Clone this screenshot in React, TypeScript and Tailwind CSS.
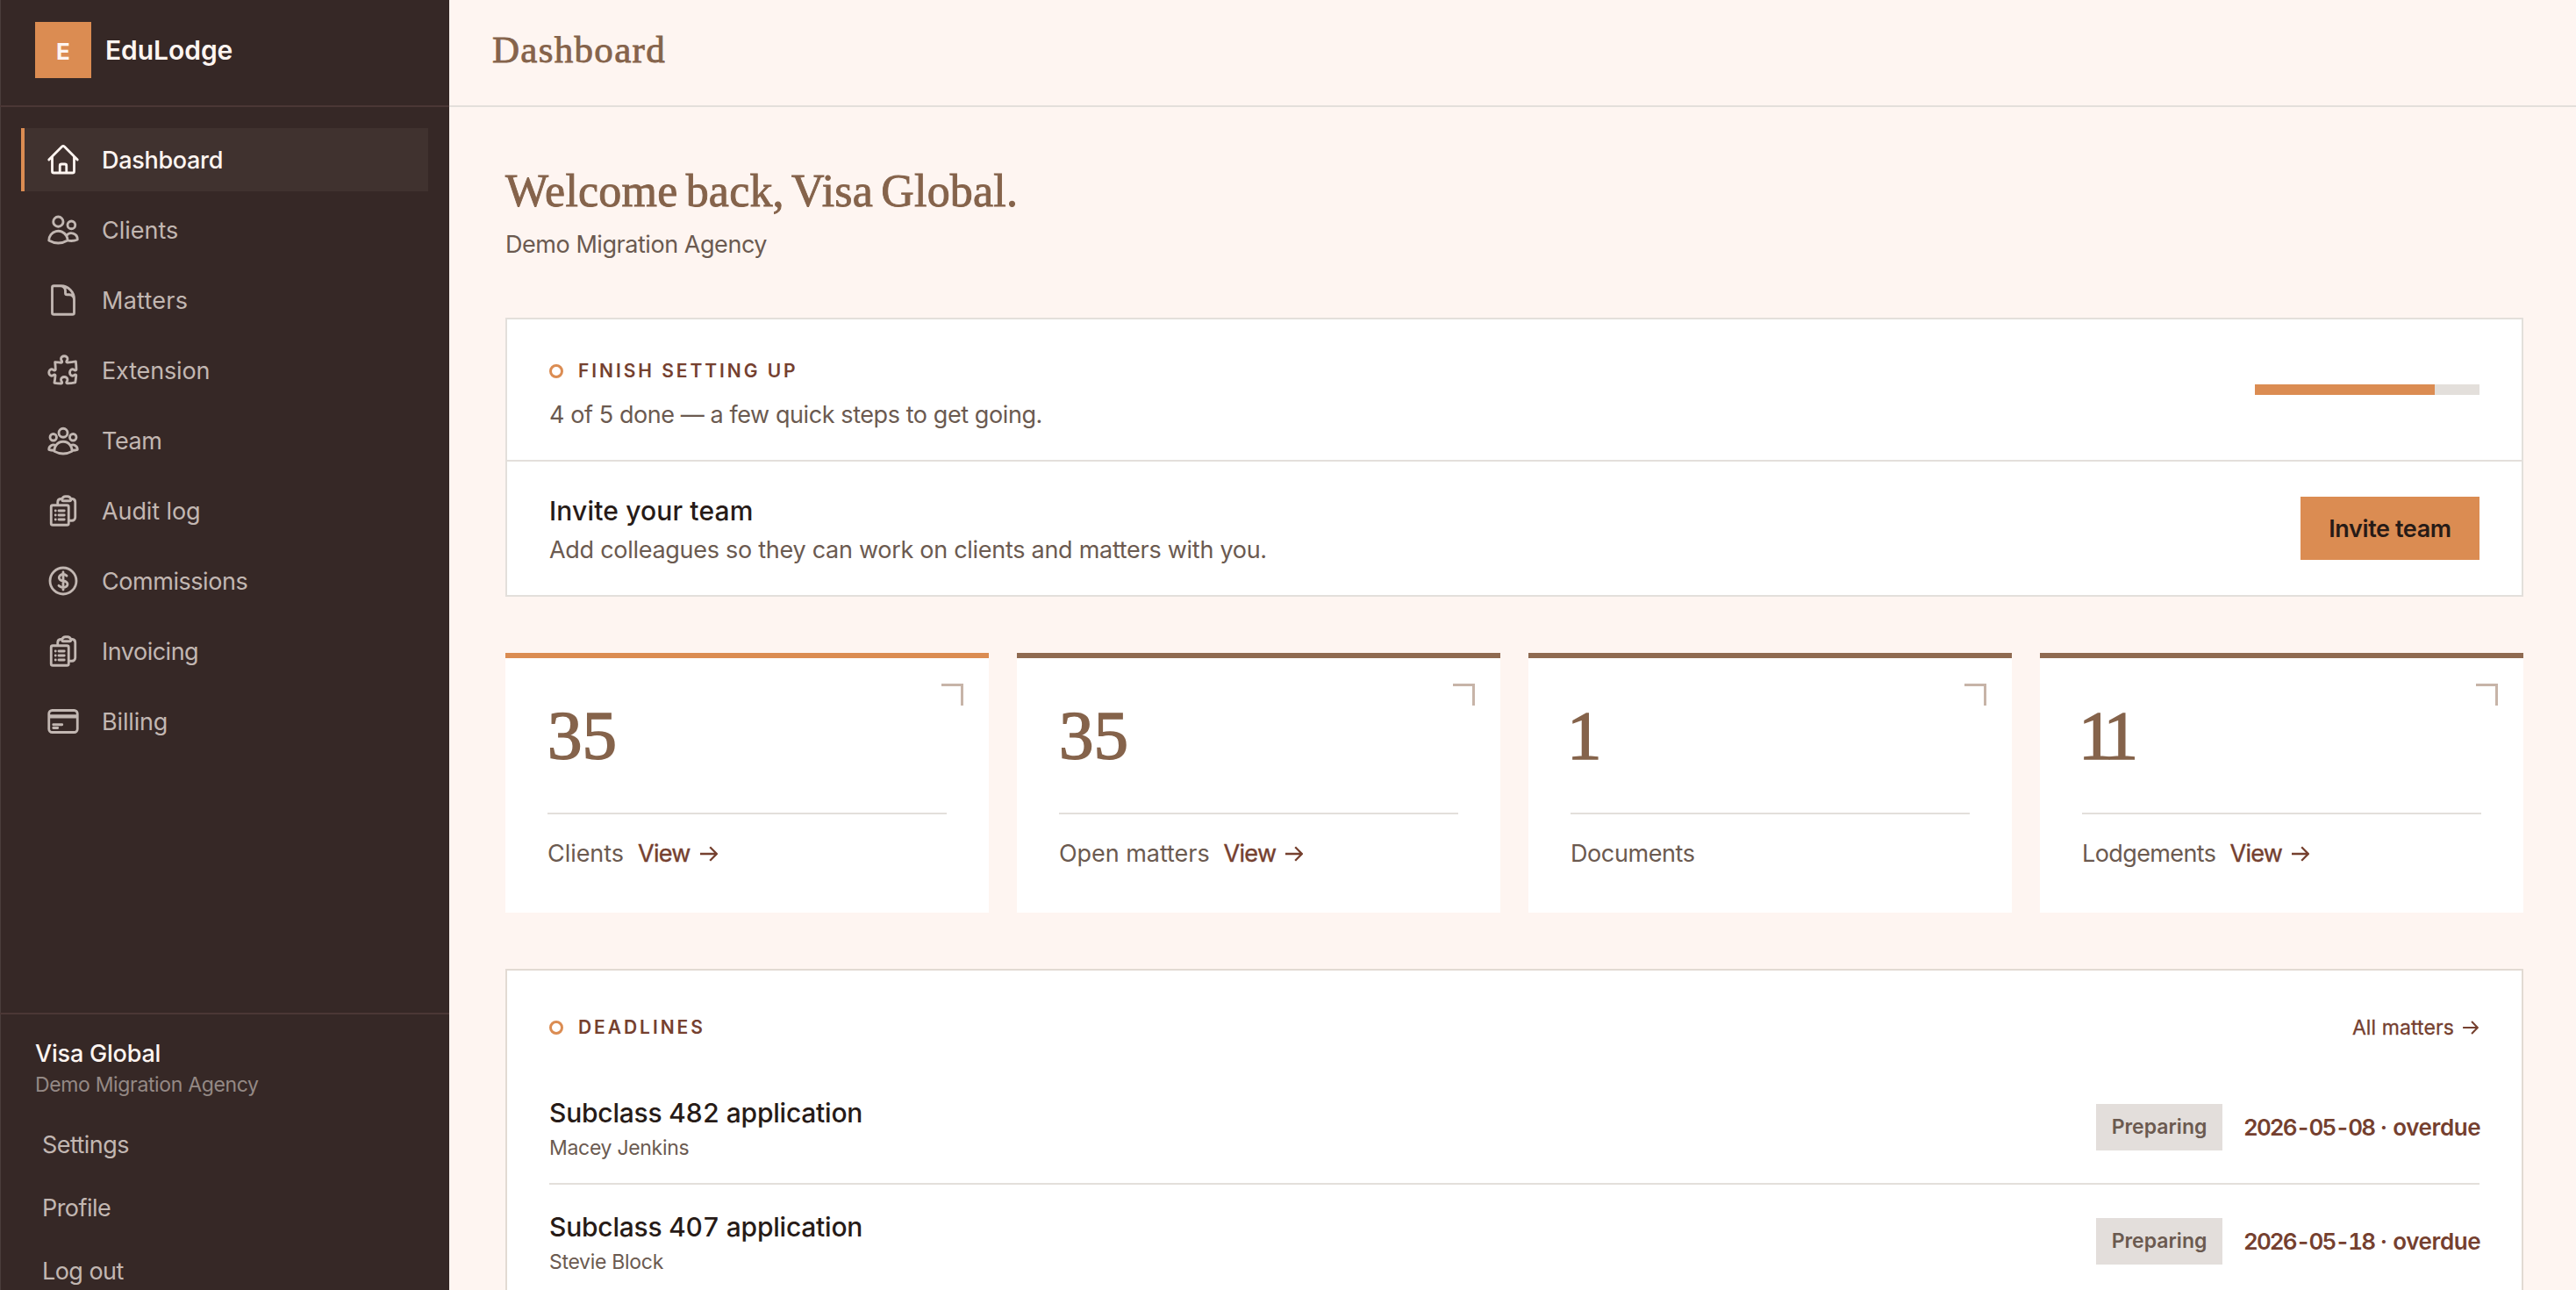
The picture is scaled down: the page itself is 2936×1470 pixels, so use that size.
import clsx from "clsx";
import type { IconType } from "react-icons";
import {
  HiOutlineClipboardDocumentList,
  HiOutlineCreditCard,
  HiOutlineCurrencyDollar,
  HiOutlineDocument,
  HiOutlineHome,
  HiOutlinePuzzlePiece,
  HiOutlineUserGroup,
  HiOutlineUsers,
} from "react-icons/hi2";

type NavItem = {
  label: string;
  icon: IconType;
  tracking: string;
  active?: boolean;
};

type Stat = {
  value: string;
  label: string;
  tracking: string;
  link?: boolean;
  accent?: boolean;
};

const navItems: NavItem[] = [
  { label: "Dashboard", icon: HiOutlineHome, tracking: "tracking-[-0.3px]", active: true },
  { label: "Clients", icon: HiOutlineUsers, tracking: "tracking-[0px]" },
  { label: "Matters", icon: HiOutlineDocument, tracking: "tracking-[0.25px]" },
  { label: "Extension", icon: HiOutlinePuzzlePiece, tracking: "tracking-[-0.15px]" },
  { label: "Team", icon: HiOutlineUserGroup, tracking: "tracking-[-0.4px]" },
  { label: "Audit log", icon: HiOutlineClipboardDocumentList, tracking: "tracking-[-0.1px]" },
  { label: "Commissions", icon: HiOutlineCurrencyDollar, tracking: "tracking-[-0.45px]" },
  { label: "Invoicing", icon: HiOutlineClipboardDocumentList, tracking: "tracking-[-0.5px]" },
  { label: "Billing", icon: HiOutlineCreditCard, tracking: "tracking-[-0.15px]" },
];

const accountLinks = ["Settings", "Profile", "Log out"];

const stats: Stat[] = [
  { value: "35", label: "Clients", tracking: "tracking-[-0.05px]", link: true, accent: true },
  { value: "35", label: "Open matters", tracking: "tracking-[-0.05px]", link: true },
  { value: "1", label: "Documents", tracking: "tracking-[-0.4px]" },
  { value: "11", label: "Lodgements", tracking: "tracking-[-0.6px]", link: true },
];

const deadlines = [
  { title: "Subclass 482 application", client: "Macey Jenkins", due: "2026-05-08" },
  { title: "Subclass 407 application", client: "Stevie Block", due: "2026-05-18" },
];

function Arrow({ className }: { className?: string }) {
  return (
    <svg
      className={className}
      viewBox="0 0 20 18"
      fill="none"
      stroke="currentColor"
      strokeWidth="2.3"
    >
      <path d="M0 9h18.5M11.2 1.2 18.8 9l-7.6 7.8" />
    </svg>
  );
}

function Eyebrow({ children }: { children: string }) {
  return (
    <div className="flex items-center gap-[17px]">
      <span className="h-4 w-4 rounded-full border-3 border-[#db8c52]" />
      <span className="text-[21px] leading-8 font-semibold tracking-[2.95px] text-[#75402f] uppercase">
        {children}
      </span>
    </div>
  );
}

function Sidebar() {
  return (
    <aside className="flex h-full w-[512px] shrink-0 flex-col bg-[#362826] shadow-[inset_1px_0_0_#4a3d3b]">
      <div className="flex h-[122px] shrink-0 items-center gap-4 border-b-2 border-[#4b3735] px-10 pb-[6px]">
        <div className="flex h-16 w-16 items-center justify-center bg-[#db8c52] pt-0.5 text-[26px] font-bold text-[#fef5f1]">
          E
        </div>
        <span className="text-[30px] font-semibold tracking-[-0.05px] text-[#fef5f1]">
          EduLodge
        </span>
      </div>

      <nav className="flex flex-1 flex-col gap-2 px-6 pt-6">
        {navItems.map(({ label, icon: Icon, tracking, active }) => (
          <a
            key={label}
            className={clsx(
              "flex h-[72px] items-center gap-6 border-l-4 px-6 text-[27px]",
              tracking,
              active
                ? "border-[#db8c52] bg-[#40322f] font-medium text-[#fef5f1]"
                : "border-transparent text-[#c2b7b2]",
            )}
          >
            <Icon className="h-10 w-10 shrink-0 stroke-[1.7]" />
            <span className="pt-0.5">{label}</span>
          </a>
        ))}
      </nav>

      <div className="flex h-[316px] shrink-0 flex-col overflow-hidden border-t-2 border-[#4b3735] px-10 pt-6">
        <p className="-mb-0.5 text-[27px] leading-[42px] font-medium tracking-[-0.2px] text-[#fef5f1]">
          Visa Global
        </p>
        <p className="text-[23px] leading-8 tracking-[-0.35px] text-[#948985]">
          Demo Migration Agency
        </p>
        <div className="mt-4 flex flex-col">
          {accountLinks.map((label) => (
            <a
              key={label}
              className="flex h-[72px] shrink-0 items-center px-2 pt-0.5 text-[27px] tracking-[-0.55px] text-[#c2b7b2]"
            >
              {label}
            </a>
          ))}
        </div>
      </div>
    </aside>
  );
}

function SetupCard() {
  const done = 4;
  const total = 5;

  return (
    <section className="border-2 border-[#e3dfdb] bg-white">
      <div className="flex h-[162px] items-center justify-between border-b-2 border-[#e3dfdb] px-12">
        <div className="mt-[43px] self-start">
          <Eyebrow>Finish setting up</Eyebrow>
          <p className="mt-[13px] text-[27px] leading-[42px] tracking-[-0.42px] text-[#6b5a50]">
            {done} of {total} done — a few quick steps to get going.
          </p>
        </div>
        <div className="h-3 w-64 bg-[#e3dfdb]">
          <div
            className="h-full bg-[#db8c52]"
            style={{ width: `${(done / total) * 100}%` }}
          />
        </div>
      </div>
      <div className="flex h-[152px] items-center justify-between px-12">
        <div>
          <p className="text-[30px] leading-[48px] font-medium tracking-[0.15px] text-[#271b17]">
            Invite your team
          </p>
          <p className="-mb-0.5 text-[27px] leading-[42px] tracking-[-0.28px] text-[#6b5a50]">
            Add colleagues so they can work on clients and matters with you.
          </p>
        </div>
        <button className="h-[72px] w-[204px] bg-[#db8c52] pt-0.5 text-[27px] font-semibold tracking-[-0.4px] text-[#271b17]">
          Invite team
        </button>
      </div>
    </section>
  );
}

function StatCard({ value, label, tracking, link, accent }: Stat) {
  return (
    <div
      className={clsx(
        "relative border-t-[6px] bg-white p-12",
        accent ? "border-[#db8c52]" : "border-[#8f6a51]",
      )}
    >
      <span className="absolute top-[29px] right-[29px] h-[25px] w-[25px] border-t-3 border-r-3 border-[#c7b4a8]" />
      <p
        className={clsx(
          "font-['Liberation_Serif',serif] text-[79px] leading-[80px] text-[#85634b] [-webkit-text-stroke:1.6px]",
          value === "11" && "tracking-[-8px]",
          value.startsWith("1") && "-ml-1",
        )}
      >
        {value}
      </p>
      <div className="mt-12 -mb-0.5 flex items-center gap-4 border-t-2 border-[#e3dfdb] pt-6 text-[27px] leading-[42px] text-[#6b5a50]">
        <span className={tracking}>{label}</span>
        {link && (
          <a className="flex items-center gap-[11px] tracking-[-0.7px] text-[#75402f] [-webkit-text-stroke:0.4px]">
            View
            <Arrow className="h-[18px] w-5" />
          </a>
        )}
      </div>
    </div>
  );
}

function DeadlinesCard() {
  return (
    <section className="border-2 border-[#e2dad3] bg-white px-12 pt-12">
      <div className="mb-8 flex h-[34px] items-center justify-between">
        <Eyebrow>Deadlines</Eyebrow>
        <a className="flex items-center gap-[10px] pr-px text-[23px] tracking-[0.1px] text-[#75402f] [-webkit-text-stroke:0.3px]">
          All matters
          <Arrow className="h-4 w-[18px]" />
        </a>
      </div>
      {deadlines.map(({ title, client, due }) => (
        <div
          key={title}
          className="flex items-center justify-between border-b-2 border-[#e3dfdb] py-6"
        >
          <div>
            <p className="text-[30px] leading-[48px] font-medium tracking-[-0.22px] text-[#271b17] tabular-nums">
              {title}
            </p>
            <p className="text-[23px] leading-8 tracking-[-0.3px] text-[#6b5a50]">
              {client}
            </p>
          </div>
          <div className="flex items-center gap-6">
            <span className="flex h-[53px] w-36 items-center justify-center bg-[#e3dedb] text-[23px] font-semibold text-[#6b5a50]">
              Preparing
            </span>
            <span className="w-[269px] text-right text-[26px] font-semibold tracking-[-0.4px] whitespace-nowrap text-[#75402f] tabular-nums">
              <span className="tracking-[-1.9px]">{due}</span> · overdue
            </span>
          </div>
        </div>
      ))}
    </section>
  );
}

export default function App() {
  return (
    <div className="flex h-screen overflow-hidden bg-[#fef5f1] font-['Inter',sans-serif]">
      <Sidebar />
      <div className="flex min-w-0 flex-1 flex-col">
        <header className="flex h-[122px] shrink-0 items-center border-b-2 border-[#e3dfdb] px-[49px] pb-[6px]">
          <h1 className="font-['Liberation_Serif',serif] text-[43px] tracking-[1.3px] text-[#85634b] [-webkit-text-stroke:0.8px]">
            Dashboard
          </h1>
        </header>
        <main className="flex min-h-0 flex-1 flex-col overflow-hidden pt-16 pr-[60px] pl-16">
          <h2 className="font-['Liberation_Serif',serif] text-[52px] leading-[64px] tracking-[0.2px] text-[#85634b] [word-spacing:-4px] [-webkit-text-stroke:0.9px]">
            Welcome back, Visa Global.
          </h2>
          <p className="mt-2 -mb-0.5 text-[27px] leading-[42px] tracking-[-0.45px] text-[#6b5a50]">
            Demo Migration Agency
          </p>
          <div className="mt-16 flex shrink-0 flex-col gap-16">
            <SetupCard />
            <div className="grid grid-cols-4 gap-8">
              {stats.map((stat) => (
                <StatCard key={stat.label} {...stat} />
              ))}
            </div>
            <DeadlinesCard />
          </div>
        </main>
      </div>
    </div>
  );
}
